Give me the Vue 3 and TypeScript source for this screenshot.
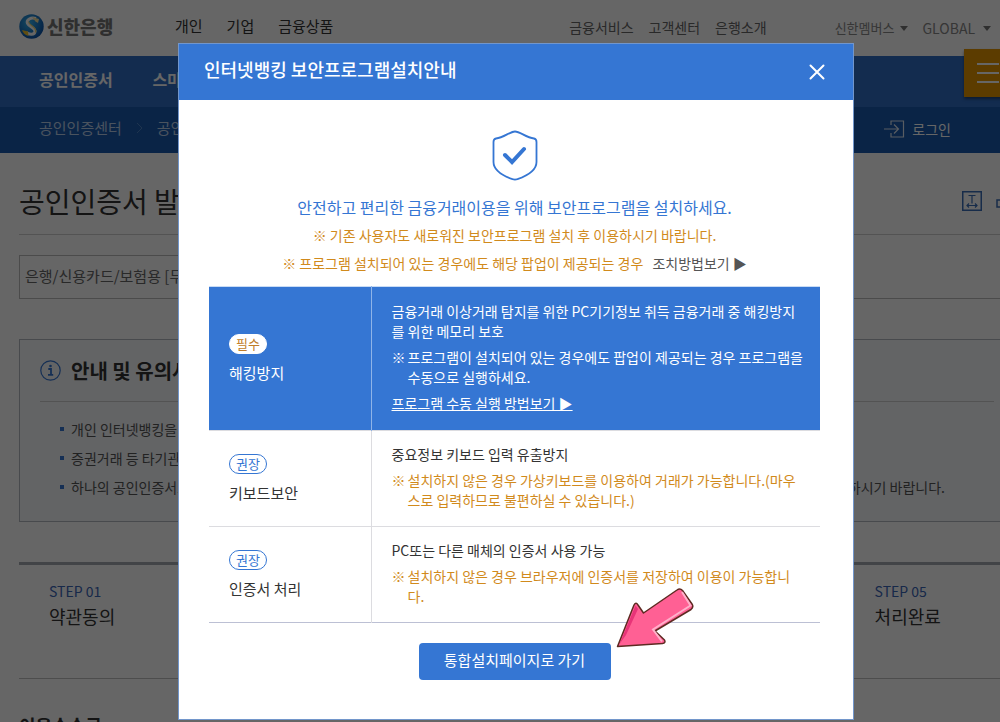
<script setup lang="ts">
interface Program {
  level: string
  name: string
  required: boolean
  desc: string
  note: string
  link?: string
}

const mainMenu: string[] = ['개인', '기업', '금융상품']
const subMenu: string[] = ['금융서비스', '고객센터', '은행소개']
const notices: string[][] = [
  ['개인 인터넷뱅킹을'],
  ['증권거래 등 타기관'],
  ['하나의 공인인증서로', '하시기 바랍니다.'],
]
const steps: { no: string; name: string }[] = [
  { no: 'STEP 01', name: '약관동의' },
  { no: 'STEP 05', name: '처리완료' },
]
const programs: Program[] = [
  {
    level: '필수',
    name: '해킹방지',
    required: true,
    desc: '금융거래 이상거래 탐지를 위한 PC기기정보 취득 금융거래 중 해킹방지를 위한 메모리 보호',
    note: '프로그램이 설치되어 있는 경우에도 팝업이 제공되는 경우 프로그램을 수동으로 실행하세요.',
    link: '프로그램 수동 실행 방법보기 ▶',
  },
  {
    level: '권장',
    name: '키보드보안',
    required: false,
    desc: '중요정보 키보드 입력 유출방지',
    note: '설치하지 않은 경우 가상키보드를 이용하여 거래가 가능합니다.(마우스로 입력하므로 불편하실 수 있습니다.)',
  },
  {
    level: '권장',
    name: '인증서 처리',
    required: false,
    desc: 'PC또는 다른 매체의 인증서 사용 가능',
    note: '설치하지 않은 경우 브라우저에 인증서를 저장하여 이용이 가능합니다.',
  },
]
</script>

<template>
  <div class="viewport">
    <div class="page">
      <header class="top">
        <a href="#" class="logo">
          <svg width="25" height="25" viewBox="0 0 25 25" aria-hidden="true">
            <defs>
              <radialGradient id="globe" cx="0.4" cy="0.35" r="0.7">
                <stop offset="0" stop-color="#35b4f0" />
                <stop offset="1" stop-color="#0a4fa8" />
              </radialGradient>
            </defs>
            <circle cx="12.5" cy="12.5" r="12.2" fill="url(#globe)" />
            <path d="M17 4.500C12 3 7 5.500 8.500 9.500C10 13 16.500 13.500 16 17.500C15.500 21 10.500 21 7 18.500" fill="none" stroke="#fff" stroke-width="3" />
            <path d="M13 3L20 5L19 9L16.500 7.500Z" fill="#f4e2a0" />
            <path d="M9.500 7.500C10 12 18.500 13 16.500 18.500" fill="none" stroke="#f0d878" stroke-width="1.200" />
            <path d="M3 16L9 17.500L9.500 22C6 21 4 19 3 16Z" fill="#f2c32c" />
          </svg>
          <span>신한은행</span>
        </a>
        <nav class="main-menu">
          <a v-for="m in mainMenu" :key="m" href="#">{{ m }}</a>
        </nav>
        <nav class="sub-menu">
          <a v-for="m in subMenu" :key="m" href="#">{{ m }}</a>
        </nav>
        <div class="utils">
          <button type="button">신한멤버스<i class="caret"></i></button>
          <button type="button" class="global">GLOBAL<i class="caret"></i></button>
        </div>
      </header>

      <nav class="gnb">
        <a href="#">공인인증서</a>
        <a href="#">스마트</a>
        <button type="button" class="burger" aria-label="전체메뉴">
          <i></i><i></i><i></i>
        </button>
      </nav>

      <div class="crumbs">
        <a href="#">공인인증센터</a>
        <svg width="7" height="12" viewBox="0 0 7 12" aria-hidden="true"><path d="M1 1L6 6L1 11" fill="none" stroke="#4d83c6" stroke-width="1" /></svg>
        <a href="#">공인</a>
        <a href="#" class="login">
          <svg width="21" height="18" viewBox="0 0 21 18" aria-hidden="true">
            <path d="M7 5V1H19.500V17H7V13M0 9H14M10 4.500L14.500 9L10 13.500" fill="none" stroke="#dfe8f4" stroke-width="1.200" />
          </svg>
          로그인
        </a>
      </div>

      <main class="content">
        <div class="title-row">
          <h1>공인인증서 발급</h1>
          <div class="tools">
            <button type="button" aria-label="글자크기">
              <svg width="20" height="20" viewBox="0 0 20 20" aria-hidden="true">
                <rect x="0.75" y="0.75" width="18.500" height="18.500" fill="none" stroke="#3b6fb8" stroke-width="1.500" />
                <path d="M6.500 4.500H13.500M10 4.500V12.500M5 14.500H15M7 12.500L5 14.500L7 16.500M13 12.500L15 14.500L13 16.500" fill="none" stroke="#3b6fb8" stroke-width="1.200" />
              </svg>
            </button>
            <button type="button" aria-label="인쇄">
              <svg width="20" height="20" viewBox="0 0 20 20" aria-hidden="true">
                <path d="M4 16H1V9H19V16H16M5 9V2H15V9M5 13H15V18H5Z" fill="none" stroke="#3b6fb8" stroke-width="1.500" />
              </svg>
            </button>
          </div>
        </div>

        <div class="tabs">
          <a href="#">은행/신용카드/보험용 [무료]</a>
        </div>

        <section class="info">
          <h2>
            <svg width="21" height="21" viewBox="0 0 21 21" aria-hidden="true">
              <circle cx="10.500" cy="10.500" r="9.700" fill="none" stroke="#3576d3" stroke-width="1.200" />
              <path d="M8.300 9H11V14.500M8 14.800H13.200" fill="none" stroke="#3576d3" stroke-width="1.800" />
              <circle cx="10.500" cy="6" r="1.300" fill="#3576d3" />
            </svg>
            안내 및 유의사항
          </h2>
          <ul>
            <li v-for="n in notices" :key="n[0]">
              <span v-for="part in n" :key="part">{{ part }}</span>
            </li>
          </ul>
        </section>

        <ol class="steps">
          <li v-for="s in steps" :key="s.no">
            <span>{{ s.no }}</span>
            <strong>{{ s.name }}</strong>
          </li>
        </ol>

        <h3>이용수수료</h3>
      </main>
    </div>

    <div class="overlay">
      <section class="modal" role="dialog" aria-labelledby="modal-title">
        <header class="modal-head">
          <h2 id="modal-title">인터넷뱅킹 보안프로그램설치안내</h2>
          <button type="button" aria-label="닫기">
            <svg width="16" height="16" viewBox="0 0 16 16" aria-hidden="true"><path d="M1.500 1.500L14.500 14.500M14.500 1.500L1.500 14.500" stroke="#fff" stroke-width="2" stroke-linecap="round" /></svg>
          </button>
        </header>
        <div class="modal-body">
          <svg class="shield" width="46" height="51" viewBox="0 0 46 51" aria-hidden="true">
            <path d="M23 1.500C28 1.500 34 7.500 42 8.500Q44.500 9 44.500 12V32C44.500 41 33 46.500 25.500 49.200Q23 50 20.500 49.200C13 46.500 1.500 41 1.500 32V12Q1.500 9 4 8.500C12 7.500 18 1.500 23 1.500Z" fill="none" stroke="#3576d3" stroke-width="1.800" />
            <path d="M13 25L20 32L32 19" fill="none" stroke="#3576d3" stroke-width="4" stroke-linecap="round" />
          </svg>
          <p class="lead">안전하고 편리한 금융거래이용을 위해 보안프로그램을 설치하세요.</p>
          <p class="warn">※ 기존 사용자도 새로워진 보안프로그램 설치 후 이용하시기 바랍니다.</p>
          <p class="warn">※ 프로그램 설치되어 있는 경우에도 해당 팝업이 제공되는 경우 <a href="#">조치방법보기 ▶</a></p>

          <table>
            <tbody>
              <tr v-for="p in programs" :key="p.name" :class="{ required: p.required }">
                <th scope="row">
                  <span class="badge">{{ p.level }}</span>
                  <span class="name">{{ p.name }}</span>
                </th>
                <td>
                  <p>{{ p.desc }}</p>
                  <p class="note"><span class="mark">※</span><span>{{ p.note }}</span></p>
                  <p v-if="p.link"><a href="#">{{ p.link }}</a></p>
                </td>
              </tr>
            </tbody>
          </table>

          <div class="action">
            <button type="button">통합설치페이지로 가기</button>
            <svg class="arrow" width="78" height="61" viewBox="0 0 78 61" aria-hidden="true">
              <path d="M1.500 59.500L18 18Q20 14.500 22 18L27.500 26L61 3Q64 0.800 66.500 3.500L76 17Q78 20 75 22.500L39 44L48.500 53Q50 56 46.500 56.500Z" fill="#ff6094" stroke="#5e2a22" stroke-width="1.500" stroke-linejoin="round" />
              <path d="M3.500 57L19.500 18.500L22 22L10 48Z" fill="#e83478" />
              <path d="M66 5L74.500 18.500L37 42.500L46 54.500" fill="none" stroke="#ffb0cb" stroke-width="2" />
            </svg>
          </div>
        </div>
      </section>
    </div>
  </div>
</template>

<style>
body {
  margin: 0;
  background: #fff;
}
</style>

<style scoped>
* {
  box-sizing: border-box;
}
.viewport {
  position: relative;
  height: 100vh;
  overflow: hidden;
  font-family: "Noto Sans CJK KR", sans-serif;
  font-size: 14px;
  line-height: 20px;
  color: #333;
}
h1, h2, h3, p, ul, ol {
  margin: 0;
  padding: 0;
  list-style: none;
}
a {
  color: inherit;
  text-decoration: none;
}
button {
  border: 0;
  padding: 0;
  background: none;
  color: inherit;
  font: inherit;
  cursor: pointer;
}
svg {
  display: block;
  flex: none;
}
.page {
  min-width: 1070px;
}
.top {
  display: flex;
  align-items: center;
  height: 56px;
  padding: 0 79px 4px 19px;
  white-space: nowrap;
}
.logo {
  display: flex;
  align-items: center;
  gap: 3px;
  width: 156px;
  font-size: 18px;
  font-weight: 900;
  color: #777;
}
.main-menu {
  display: flex;
  flex: 1;
  gap: 24px;
  font-size: 15px;
}
.sub-menu {
  display: flex;
  gap: 15px;
  padding-top: 2px;
  color: #666;
}
.utils {
  display: flex;
  gap: 14px;
  margin-left: 68px;
  padding-top: 4px;
  color: #888;
  font-size: 13px;
}
.utils button {
  display: flex;
  align-items: center;
  gap: 6px;
}
.utils .global {
  gap: 8px;
  font-size: 14px;
}
.caret {
  border: 4px solid transparent;
  border-top: 5px solid #777;
  border-bottom: 0;
}
.gnb {
  position: relative;
  display: flex;
  align-items: center;
  gap: 40px;
  height: 51px;
  padding: 0 39px 6px;
  background: #306ec6;
  color: #fff;
  font-size: 16px;
  font-weight: 700;
}
.burger {
  position: absolute;
  left: 964px;
  top: -7px;
  display: grid;
  align-content: center;
  justify-items: center;
  gap: 7px;
  width: 48px;
  height: 48px;
  background: #e69600;
  box-shadow: 0 2px 3px rgba(0, 0, 0, 0.4);
}
.burger i {
  width: 22px;
  height: 2px;
  background: #fff;
}
.crumbs {
  display: flex;
  align-items: center;
  gap: 14px;
  height: 46px;
  padding: 0 119px 4px 39px;
  background: #195aaf;
  color: #b9cfec;
  font-size: 15px;
}
.login {
  display: flex;
  align-items: center;
  gap: 7px;
  margin-left: auto;
  padding-top: 2px;
  color: #fff;
  font-size: 14px;
}
.content {
  padding: 0 19px;
}
.title-row {
  display: flex;
  align-items: center;
  justify-content: space-between;
  height: 82px;
  padding-top: 14px;
  border-bottom: 1px solid #d0d0d0;
}
h1 {
  font-size: 28px;
  font-weight: 400;
  line-height: 40px;
}
.tools {
  display: flex;
  gap: 14px;
  margin-right: 35px;
}
.tabs {
  margin-top: 20px;
  border-bottom: 1px solid #bbb;
}
.tabs a {
  display: block;
  width: 50%;
  height: 43px;
  padding: 10px 5px;
  border: solid #bbb;
  border-width: 1px 1px 0;
  color: #666;
  font-size: 15px;
}
.info {
  margin-top: 40px;
  padding: 0 56px 0 20px;
  height: 183px;
  border: 1px solid #b4b8c0;
  background: #f7f9fd;
}
.info h2 {
  display: flex;
  align-items: center;
  gap: 10px;
  height: 62px;
  border-bottom: 1px solid #d0d0d0;
  font-size: 20px;
}
.info ul {
  padding: 12px 49px 0 20px;
}
.info li {
  display: flex;
  align-items: center;
  justify-content: space-between;
  height: 29px;
  color: #555;
}
.info li::before {
  content: "";
  width: 4px;
  height: 4px;
  margin-right: 7px;
  background: #3576d3;
}
.info li span:first-of-type {
  margin-right: auto;
}
.steps {
  display: grid;
  grid-template-columns: repeat(5, 1fr);
  margin-top: 40px;
  border-top: 3px solid #a6aab2;
  border-bottom: 1px solid #c0c0c0;
}
.steps li {
  display: grid;
  height: 113px;
  padding: 16px 30px;
  align-content: start;
  gap: 2px;
}
.steps li:last-child {
  grid-column: 5;
}
.steps span {
  color: #3b66b8;
}
.steps strong {
  font-size: 18px;
  font-weight: 400;
  line-height: 26px;
}
h3 {
  margin-top: 33px;
  font-size: 18px;
  line-height: 26px;
}
.overlay {
  position: absolute;
  inset: 0;
  display: flex;
  align-items: flex-start;
  justify-content: center;
  padding: 43px 0 0 32px;
  background: rgba(0, 0, 0, 0.6);
}
.modal {
  width: 70%;
  max-width: 676px;
  border: 1px solid #7296cb;
  background: #fff;
}
.modal-head {
  display: flex;
  align-items: center;
  justify-content: space-between;
  height: 56px;
  padding: 0 28px 0 25px;
  background: #3576d3;
  color: #fff;
}
.modal-head h2 {
  padding-bottom: 6px;
  font-size: 18px;
  font-weight: 500;
  line-height: 26px;
}
.modal-body {
  padding: 30px 33px 39px 30px;
  text-align: center;
}
.shield {
  margin: 0 auto 12px;
}
.lead,
.warn {
  line-height: 28px;
  color: #d18a1c;
}
.lead {
  color: #3576d3;
  font-size: 16px;
}
.warn a {
  margin-left: 6px;
  color: #555;
}
table {
  width: 100%;
  margin-top: 9px;
  border-collapse: collapse;
  border-top: 1px solid #c9dcf5;
  border-bottom: 1px solid #bcc0d4;
  text-align: left;
}
tr + tr {
  border-top: 1px solid #dcdce0;
}
th {
  width: 162px;
  padding: 0 20px;
  border-right: 1px solid #dcdce0;
  font-weight: 400;
  font-size: 15px;
}
td {
  padding: 13px 17px 16px 20px;
}
td p + p {
  margin-top: 6px;
}
.badge {
  display: block;
  width: 38px;
  margin-bottom: 8px;
  border: 1px solid #3576d3;
  border-radius: 10px;
  color: #3576d3;
  font-size: 13px;
  line-height: 18px;
  text-align: center;
}
.name {
  display: block;
  line-height: 22px;
}
.note {
  display: flex;
  color: #d18a1c;
}
.mark {
  flex: none;
  width: 16px;
}
.required {
  background: #3576d3;
  color: #fff;
}
.required td {
  padding: 14px 17px 17px 20px;
}
.required th {
  border-right-color: #8fb4e8;
}
.required .badge {
  border-color: #fff;
  background: #fff;
  color: #c07d28;
}
.required .note {
  color: #fff;
}
td a {
  text-decoration: underline;
}
.action {
  position: relative;
  width: 192px;
  margin: 20px auto 0;
}
.action button {
  width: 100%;
  height: 37px;
  padding-bottom: 3px;
  border-radius: 4px;
  background: #3576d3;
  color: #fff;
  font-size: 15px;
}
.arrow {
  position: absolute;
  left: 197px;
  top: -56px;
}
</style>
